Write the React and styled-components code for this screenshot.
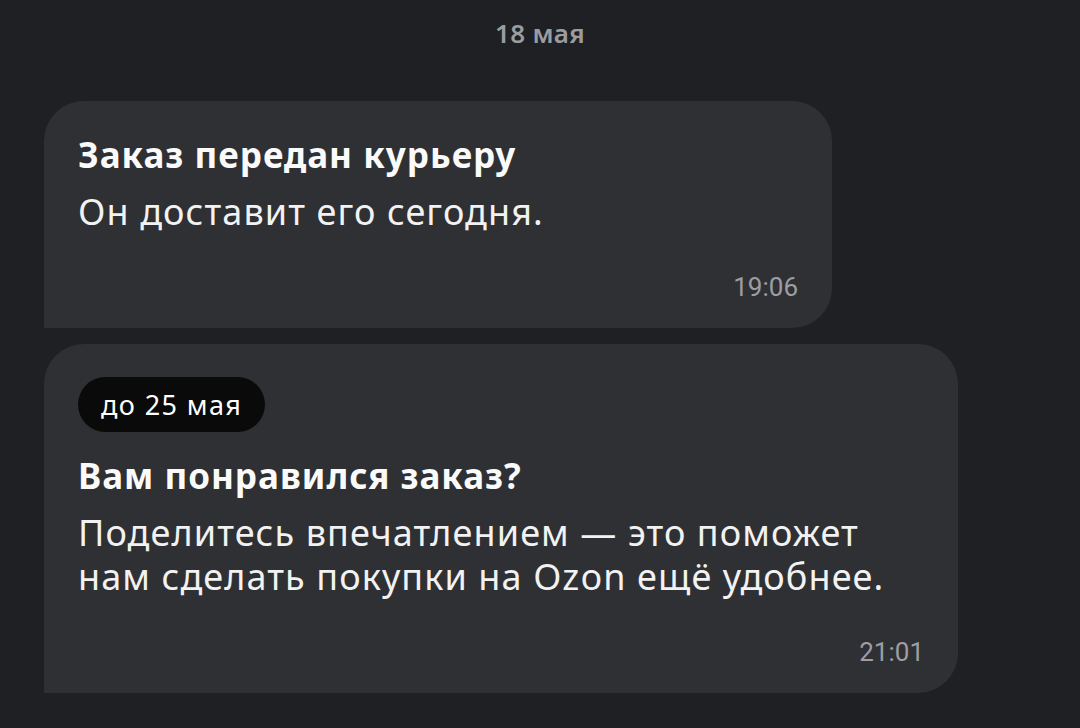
import styled, { createGlobalStyle } from "styled-components";

const GlobalStyle = createGlobalStyle`
  html, body {
    margin: 0;
    padding: 0;
    background: #1f2024;
  }
  body {
    font-family: "Noto Sans", Roboto, sans-serif;
    -webkit-font-smoothing: antialiased;
  }
`;

export default function App() {
  const messages = [
    {
      id: 1,
      width: 788,
      title: "Заказ передан курьеру",
      lines: ["Он доставит его сегодня."],
      time: "19:06",
    },
    {
      id: 2,
      width: 914,
      badge: "до 25 мая",
      title: "Вам понравился заказ?",
      lines: [
        "Поделитесь впечатлением — это поможет",
        "нам сделать покупки на Ozon ещё удобнее.",
      ],
      time: "21:01",
    },
  ];

  return (
    <>
      <GlobalStyle />
      <Chat>
        <DateLabel>18 мая</DateLabel>
        <Messages>
          {messages.map((msg) => (
            <Bubble key={msg.id} $width={msg.width}>
              {msg.badge && <Badge>{msg.badge}</Badge>}
              <Title>{msg.title}</Title>
              <Text>
                {msg.lines.map((line) => (
                  <Line key={line}>{line}</Line>
                ))}
              </Text>
              <Time>{msg.time}</Time>
            </Bubble>
          ))}
        </Messages>
      </Chat>
    </>
  );
}

const Chat = styled.main`
  width: 1080px;
  min-height: 728px;
  box-sizing: border-box;
  padding: 17px 44px 0;
  display: flex;
  flex-direction: column;
`;

const DateLabel = styled.div`
  text-align: center;
  color: #9b9ca0;
  font-size: 26px;
  font-weight: 600;
  letter-spacing: 0.3px;
  line-height: 32px;
  height: 32px;
`;

const Messages = styled.div`
  margin-top: 52px;
  display: flex;
  flex-direction: column;
  gap: 16px;
`;

const Bubble = styled.section`
  width: ${(props) => props.$width}px;
  box-sizing: border-box;
  background: #2f3034;
  border-radius: 40px 40px 40px 0;
  padding: 32px 34px 25px;
  display: flex;
  flex-direction: column;
  align-items: flex-start;
`;

const Badge = styled.div`
  height: 55px;
  display: inline-flex;
  align-items: center;
  padding: 0 23px;
  margin: 1px 0 22px;
  background: #0a0a0a;
  border-radius: 28px;
  color: #ffffff;
  font-size: 27px;
  letter-spacing: 1.4px;
`;

const Title = styled.h3`
  margin: 0;
  color: #fafafa;
  font-size: 35px;
  font-weight: 700;
  letter-spacing: 1px;
  line-height: 44px;
`;

const Text = styled.div`
  margin-top: 13px;
  display: flex;
  flex-direction: column;
  color: #f2f2f2;
  font-size: 36px;
  font-weight: 400;
  letter-spacing: 1.1px;
`;

const Line = styled.p`
  margin: 0;
  height: 44px;
  line-height: 44px;
`;

const Time = styled.span`
  align-self: flex-end;
  margin-top: 37px;
  color: #9d9ea2;
  font-family: Roboto, sans-serif;
  font-size: 26px;
  line-height: 32px;
`;
